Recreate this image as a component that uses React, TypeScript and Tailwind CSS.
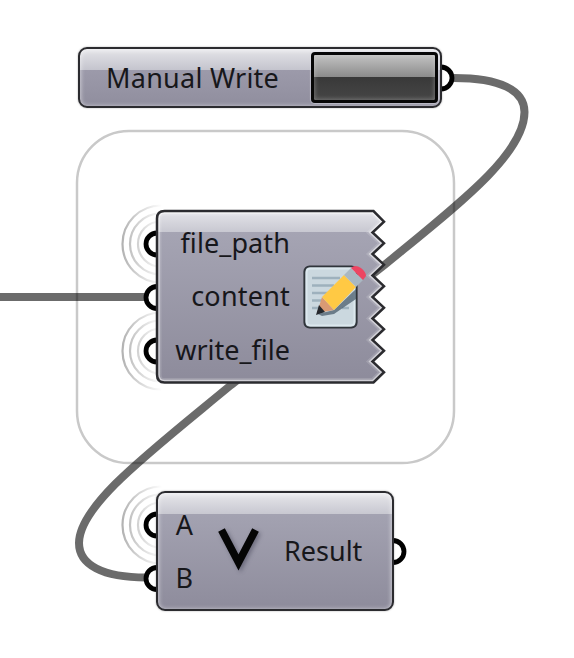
import type { ReactNode } from "react";

const FONT = "font-['Noto_Sans','Open_Sans',sans-serif] text-[27px] leading-none text-[#17171b] whitespace-nowrap";

const SHELL =
  "absolute rounded-[9px] border-[2.5px] border-[#2b2b2f] shadow-[0_0_2px_rgba(0,0,0,0.35),inset_0_1px_4px_1px_rgba(255,255,255,0.5)]";

const JAGGED =
  "M9 1.5H218L228.500 12.200L217 23L228.500 33.700L217 44.500L228.500 55.200L217 66L228.500 76.700L217 87.500L228.500 98.200L217 109L228.500 119.700L217 130.500L228.500 141.200L217 152L228.500 162.700L218 173H9Q1.500 173 1.500 165V9Q1.500 1.500 9 1.500Z";

function Grip({ x, y }: { x: number; y: number }) {
  return <circle cx={x} cy={y} r="11" fill="#fff" stroke="#000" strokeWidth="4.8" />;
}

function Ripples({ y }: { y: number }) {
  return (
    <g fill="none" stroke="url(#ripple)" strokeWidth="2.2">
      <circle cx="160.500" cy={y} r="22.500" />
      <circle cx="160.500" cy={y} r="30.500" />
      <circle cx="161" cy={y} r="38.500" />
    </g>
  );
}

function Wiring() {
  return (
    <svg className="absolute inset-0" width="574" height="658" viewBox="0 0 574 658">
      <defs>
        <linearGradient id="ripple" gradientUnits="userSpaceOnUse" x1="122" y1="0" x2="162" y2="0">
          <stop offset="0" stopColor="#b2b2b2" />
          <stop offset="0.35" stopColor="#cfcfcf" />
          <stop offset="1" stopColor="#ffffff" />
        </linearGradient>
      </defs>
      <rect x="77" y="131" width="377" height="332" rx="52" fill="none" stroke="#c9c9c9" strokeWidth="2.5" />
      <Ripples y={244} />
      <Ripples y={351} />
      <Ripples y={525} />
      <g fill="none" stroke="#000" strokeOpacity="0.58" strokeWidth="8">
        <path d="M454 78C500 78 524.500 90 524.500 112C524.500 155 455 207 382 267L231 385C150 452 79 505 79 543C79 565 103 577.500 146 577.500" />
        <path d="M0 297H146" />
      </g>
      <Grip x={441} y={78} />
      <Grip x={157} y={244} />
      <Grip x={157} y={297.5} />
      <Grip x={157} y={351} />
      <Grip x={157} y={525} />
      <Grip x={157} y={578.5} />
      <Grip x={393} y={551.5} />
    </svg>
  );
}

function Label({ className, children }: { className: string; children: ReactNode }) {
  return <span className={`${FONT} ${className}`}>{children}</span>;
}

function MemoIcon() {
  return (
    <svg width="66" height="68" viewBox="0 0 66 68" className="shrink-0">
      <rect x="2.500" y="3.500" width="52" height="61" rx="5" fill="#cbd8df" stroke="#30353b" strokeWidth="2.200" />
      <rect x="4.500" y="5.500" width="48" height="57" rx="4" fill="none" stroke="#dce8ee" strokeWidth="2" />
      <path d="M10 15H38M10 22.500H32M10 30H27M10 37.500H22M10 45H18M40 45H47" stroke="#9eb1bd" strokeWidth="2.600" />
      <path d="M16 51L32 47L54 26V36L32 51L20 53Z" fill="#4b5e6c" opacity=".75" />
      <path d="M15 50L20 34L32 47Z" fill="#d99a74" />
      <path d="M20 34L42 12L54 24L32 47Z" fill="#ffc944" />
      <path d="M14 52L17 42L23 49Z" fill="#25282d" />
      <path d="M42 12L49 5L61 17L54 24Z" fill="#a9b8c2" />
      <path d="M49 5Q53 1 59 5Q64 9 64 13L61 17Z" fill="#ed4562" />
    </svg>
  );
}

export default function App() {
  return (
    <main className="relative h-[658px] w-[574px] overflow-hidden bg-white">
      <Wiring />

      <section className={`${SHELL} left-[78px] top-[47px] flex h-[61px] w-[364px] items-center justify-between bg-[linear-gradient(#e4e4e8_0,#c5c5ce_36%,#9c9aaa_37%,#908e9e_100%)] pl-[26px] pr-[2px]`}>
        <Label className="tracking-[0.25px]">Manual Write</Label>
        <button aria-label="Manual Write" className="h-[51px] w-[127px] rounded-[4px] border-[3px] border-[#070707] bg-[linear-gradient(#c2c2c2_0,#8c8c8c_48%,#393939_50%,#464646_100%)] shadow-[0_0_1px_1px_rgba(225,225,235,0.5),inset_0_0_4px_1px_rgba(220,220,220,0.3)]" />
      </section>

      <section className="absolute left-[155px] top-[209px] flex h-[176px] w-[231px] items-center">
        <svg className="absolute inset-0" width="231" height="176" viewBox="0 0 231 176">
          <defs>
            <linearGradient id="body" x1="0" y1="0" x2="0" y2="1">
              <stop offset="0" stopColor="#e4e4e9" />
              <stop offset="0.122" stopColor="#c8c8d1" />
              <stop offset="0.125" stopColor="#a5a4b3" />
              <stop offset="1" stopColor="#8d8b9b" />
            </linearGradient>
            <clipPath id="jagged"><path d={JAGGED} /></clipPath>
          </defs>
          <g transform="translate(0.500 0.500)">
            <path d={JAGGED} fill="url(#body)" />
            <g clipPath="url(#jagged)" fill="none" stroke="#fff">
              <path d={JAGGED} strokeOpacity=".15" strokeWidth="9" />
              <path d={JAGGED} strokeOpacity=".5" strokeWidth="5.500" />
            </g>
            <path d={JAGGED} fill="none" stroke="#2b2b2f" strokeWidth="2.5" />
          </g>
        </svg>
        <div className="relative mb-[2px] grid h-[161px] w-[135px] grid-rows-3 items-center justify-items-end">
          <Label className="tracking-[0.1px]">file_path</Label>
          <Label className="tracking-[0.2px]">content</Label>
          <Label className="">write_file</Label>
        </div>
        <div className="relative ml-[12px]"><MemoIcon /></div>
      </section>

      <section className={`${SHELL} left-[156px] top-[491px] flex h-[120px] w-[238px] items-center bg-[linear-gradient(#e6e6ea_0,#c8c8d1_18%,#a3a2b1_18.5%,#8e8c9c_100%)]`}>
        <div className="grid h-[107px] w-[35px] grid-rows-2 items-center justify-items-end">
          <Label className="">A</Label>
          <Label className="">B</Label>
        </div>
        <svg className="mb-[2px] ml-[22px] h-[52px] w-[52px] drop-shadow-[2px_2px_2px_rgba(40,40,60,0.4)]" viewBox="0 0 52 52">
          <path d="M6.500 6L23.500 38.500L40.500 6" fill="none" stroke="#050505" strokeWidth="7.500" />
        </svg>
        <Label className="mb-[2px] ml-[17px]">Result</Label>
      </section>
    </main>
  );
}
